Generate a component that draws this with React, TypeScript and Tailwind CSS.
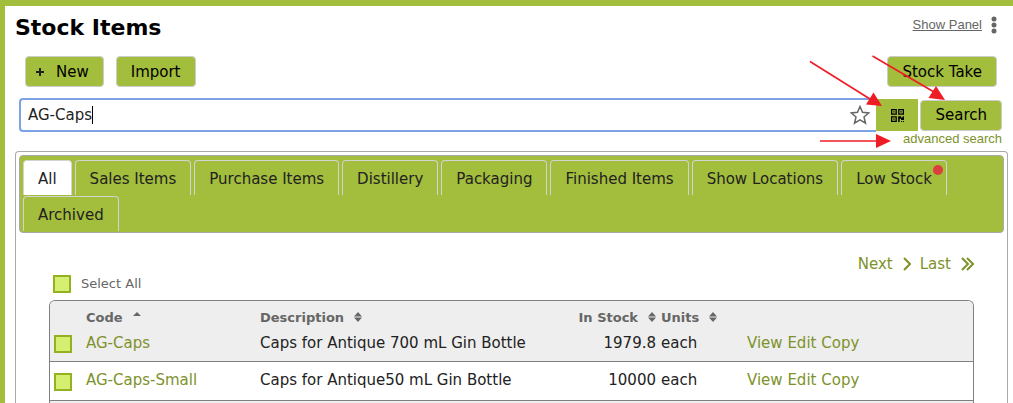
import type { ReactNode } from "react";
import clsx from "clsx";

const tabs = [
  { name: "All", active: true },
  { name: "Sales Items" },
  { name: "Purchase Items" },
  { name: "Distillery" },
  { name: "Packaging" },
  { name: "Finished Items" },
  { name: "Show Locations" },
  { name: "Low Stock", alert: true },
  { name: "Archived" },
];

const items = [
  {
    code: "AG-Caps",
    description: "Caps for Antique 700 mL Gin Bottle",
    stock: "1979.8",
    units: "each",
  },
  {
    code: "AG-Caps-Small",
    description: "Caps for Antique50 mL Gin Bottle",
    stock: "10000",
    units: "each",
  },
];

const Button = ({ children }: { children: ReactNode }) => (
  <button
    type="button"
    className="flex h-[31px] items-center rounded border border-[#cccccc] bg-[#a3bd3c] px-[14px] pt-px text-[15px] text-black"
  >
    {children}
  </button>
);

const Checkbox = ({ id, label }: { id: string; label?: string }) => (
  <input
    id={id}
    type="checkbox"
    aria-label={label}
    className="block h-[18px] w-[18px] shrink-0 appearance-none border-2 border-[#93b120] bg-[#d5ef70]"
  />
);

const SortIcon = ({ ascending }: { ascending?: boolean }) => (
  <svg viewBox="0 0 8 10" className="ml-[10px] inline-block h-[10px] w-2 fill-[#666666] align-baseline">
    {ascending ? (
      <path d="M0 4 L4 0 L8 4 Z" />
    ) : (
      <path d="M0 4.500 L4 0 L8 4.500 Z M0 5.500 L4 10 L8 5.500 Z" />
    )}
  </svg>
);

const QrIcon = () => (
  <svg viewBox="0 0 12 12" className="h-[13px] w-[13px]">
    <path
      fill="#000"
      fillRule="evenodd"
      d="M0 0h5.400v5.400H0z M1.200 1.200v3h3v-3z M6.600 0H12v5.400H6.600z M7.800 1.200v3h3v-3z M0 6.600h5.400V12H0z M1.200 7.800v3h3v-3z M2.100 2.100h1.200v1.200H2.100z M8.700 2.100h1.200v1.200H8.700z M2.100 8.700h1.200v1.200H2.100z M6.600 6.600h2.700v1.200h1.500V6.600H12v3.600H9.300V9H8v3H6.600z M9.300 11h1v1h-1z M11 11h1v1h-1z"
    />
  </svg>
);

const Arrows = () => (
  <svg
    viewBox="0 0 213 160"
    className="pointer-events-none absolute top-0 right-0 h-[160px] w-[213px]"
    stroke="#ee1c24"
    fill="#ee1c24"
  >
    <path d="M10 61.5 L70 99" strokeWidth="1.6" />
    <path d="M82 106 L66 104.500 L73.500 92.500 Z" stroke="none" />
    <path d="M72.500 56 L134 92" strokeWidth="1.6" />
    <path d="M145 100 L128.500 98 L136 86 Z" stroke="none" />
    <path d="M20 141 L77 141" strokeWidth="1.6" />
    <path d="M91 141 L76 134 L76 148 Z" stroke="none" />
  </svg>
);

export default function App() {
  return (
    <div className="relative h-screen overflow-hidden border-t-[6px] border-l-[5px] border-[#a3bd3c] bg-white font-['DejaVu_Sans',sans-serif] text-[15px] text-[#222222]">
      <div className="flex h-full flex-col pr-[5px] pl-[10px]">
        <header className="flex items-start justify-between pt-2 pr-[11px]">
          <h1 className="text-[22px] leading-7 font-bold text-black">Stock Items</h1>
          <div className="flex items-center gap-[9px] pt-px">
            <a
              href="#panel"
              className="font-['Liberation_Sans',sans-serif] text-[13px] leading-5 text-[#666666] underline"
            >
              Show Panel
            </a>
            <button type="button" aria-label="More options" className="block">
              <svg viewBox="0 0 6 18" className="h-[18px] w-[6px] fill-[#666666]">
                <circle cx="3" cy="3" r="2.500" />
                <circle cx="3" cy="9" r="2.500" />
                <circle cx="3" cy="15" r="2.500" />
              </svg>
            </button>
          </div>
        </header>

        <div className="mt-[14px] flex gap-3 pr-[11px] pl-[10px]">
          <Button>
            <svg viewBox="0 0 8 8" className="mr-3 -ml-1 h-2 w-2 fill-[#222222]">
              <path d="M3 0h2v3h3v2H5v3H3V5H0V3h3z" />
            </svg>
            New
          </Button>
          <Button>Import</Button>
          <div className="ml-auto">
            <Button>Stock Take</Button>
          </div>
        </div>

        <form className="mt-[11px] flex items-center pr-[6px] pl-1">
          <div className="relative flex-1">
            <input
              type="text"
              aria-label="Search stock items"
              defaultValue="AG-Caps"
              className="block h-[34px] w-full rounded-l border-2 border-r-0 border-[#7ca3e4] bg-white pl-[7px] text-[15px] outline-none"
            />
            <span className="absolute top-2 left-[73px] h-[18px] w-px bg-black" />
            <svg
              viewBox="0 0 20 20"
              className="absolute top-[7px] right-[6px] h-5 w-5 fill-none stroke-[#666666] stroke-[1.5]"
            >
              <path d="M10 1.500 L12.500 7.300 L18.800 7.900 L14 12 L15.500 18.200 L10 14.900 L4.500 18.200 L6 12 L1.200 7.900 L7.500 7.300 Z" />
            </svg>
          </div>
          <button
            type="button"
            aria-label="Scan code"
            className="mr-[2px] flex h-8 w-[42px] items-center justify-center bg-[#a3bd3c]"
          >
            <QrIcon />
          </button>
          <Button>Search</Button>
        </form>
        <a
          href="#advanced"
          className="mr-[6px] self-end font-['Liberation_Sans',sans-serif] text-[13px] leading-[14px] text-[#7d922a]"
        >
          advanced search
        </a>

        <main className="mt-[5px] flex-1 rounded-t border border-b-0 border-[#aaaaaa] px-[3px] pt-[3px]">
          <nav className="flex flex-wrap gap-x-[3px] rounded border border-[#aaaaaa] bg-[#a3bd3c] px-[3px] pt-1">
            {tabs.map((tab) => (
              <a
                key={tab.name}
                href="#tab"
                className={clsx(
                  "relative mb-px h-[35px] rounded-t border border-b-0 border-[#d3d3d3] px-[14px] leading-9",
                  tab.active && "bg-white"
                )}
              >
                {tab.name}
                {tab.alert && (
                  <span className="absolute top-1 right-[3px] h-[10px] w-[10px] rounded-full bg-[#dc3d3d]" />
                )}
              </a>
            ))}
          </nav>

          <div className="px-[30px]">
            <div className="mt-[21px] flex items-center justify-end gap-[9px] leading-5 text-[#7d922a]">
              <a href="#next" className="flex items-center gap-[10px]">
                Next
                <svg viewBox="0 0 8 14" className="h-[14px] w-2 fill-none stroke-[#7d922a] stroke-2">
                  <path d="M1 1 L7 7 L1 13" />
                </svg>
              </a>
              <a href="#last" className="flex items-center gap-[10px]">
                Last
                <svg viewBox="0 0 13 14" className="h-[14px] w-[13px] fill-none stroke-[#7d922a] stroke-2">
                  <path d="M1 1 L7 7 L1 13 M6 1 L12 7 L6 13" />
                </svg>
              </a>
            </div>

            <div className="flex items-center gap-[10px] pl-1">
              <Checkbox id="select-all" />
              <label htmlFor="select-all" className="text-[13px] leading-5 text-[#666666]">
                Select All
              </label>
            </div>

            <div className="mt-[6px] overflow-hidden rounded-t-md border border-b-0 border-[#808080]">
              <table className="w-full table-fixed">
                <colgroup>
                  <col className="w-[35px]" />
                  <col className="w-[174px]" />
                  <col className="w-[306px]" />
                  <col className="w-[94px]" />
                  <col className="w-[86px]" />
                  <col />
                </colgroup>
                <thead>
                  <tr className="h-[25px] bg-[#eeeeee] text-left align-bottom text-[13px] leading-4 text-[#666666]">
                    <th />
                    <th className="pl-px">
                      Code
                      <SortIcon ascending />
                    </th>
                    <th className="pl-px">
                      Description
                      <SortIcon />
                    </th>
                    <th className="pr-[3px] text-right whitespace-nowrap">
                      In Stock
                      <SortIcon />
                    </th>
                    <th className="pl-[2px]">
                      Units
                      <SortIcon />
                    </th>
                    <th />
                  </tr>
                </thead>
                <tbody>
                  {items.map((item, index) => (
                    <tr
                      key={item.code}
                      className={clsx(
                        "border-b border-[#808080]",
                        index % 2 === 0 ? "h-[35px] bg-[#eeeeee]" : "h-[39px] bg-white"
                      )}
                    >
                      <td className="pt-[2px] pl-1">
                        <Checkbox id={item.code} label={`Select ${item.code}`} />
                      </td>
                      <td className="pb-px pl-px text-[#7d922a]">
                        <a href="#item">{item.code}</a>
                      </td>
                      <td className="pb-px pl-px">{item.description}</td>
                      <td className="pr-[3px] pb-px text-right">{item.stock}</td>
                      <td className="pb-px pl-[2px]">{item.units}</td>
                      <td className="pb-px pl-[2px] text-[#7d922a]">
                        <a href="#view">View</a> <a href="#edit">Edit</a> <a href="#copy">Copy</a>
                      </td>
                    </tr>
                  ))}
                  <tr className="h-[39px] bg-[#eeeeee]">
                    <td colSpan={6} />
                  </tr>
                </tbody>
              </table>
            </div>
          </div>
        </main>
      </div>
      <div className="pointer-events-none absolute -top-[6px] right-0">
        <Arrows />
      </div>
    </div>
  );
}
